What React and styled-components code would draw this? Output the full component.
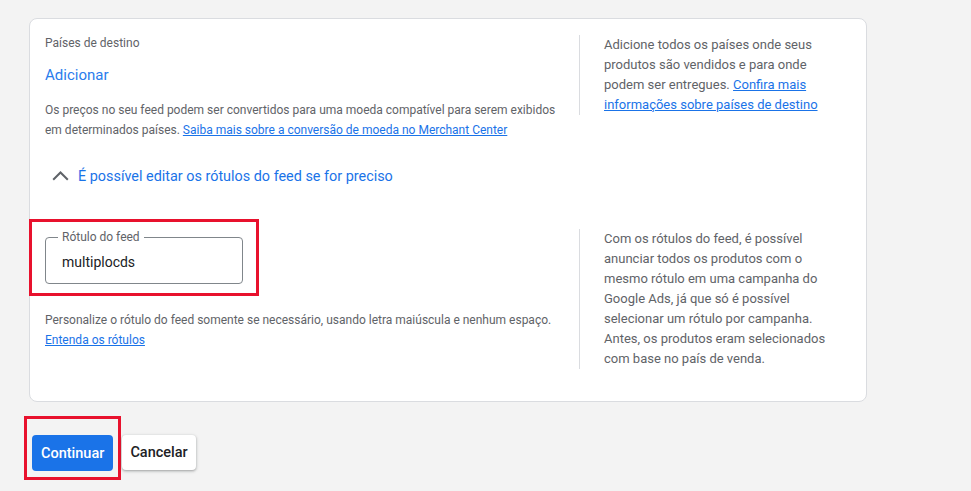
import React from "react";
import styled, { createGlobalStyle } from "styled-components";

const Global = createGlobalStyle`
  html, body { margin: 0; padding: 0; background: #f3f3f3; }
  body { font-family: Roboto, "Noto Sans", Arial, sans-serif; -webkit-font-smoothing: antialiased; }
  * { box-sizing: border-box; }
`;

const Page = styled.div`
  padding: 18px 0 0 29px;
  min-height: 491px;
`;

const Card = styled.section`
  width: 838px;
  background: #fff;
  border: 1px solid #dadce0;
  border-radius: 8px;
  padding: 16px 16px 32px 15px;
`;

const Row = styled.div`
  display: flex;
  align-items: flex-start;
  margin-top: ${(p) => p.$mt || 0}px;
`;

const LeftCol = styled.div`
  flex: 1;
  min-width: 0;
  padding-right: 20px;
`;

const RightCol = styled.div`
  flex: none;
  width: 271px;
  border-left: 1px solid #dadce0;
  padding: 0 14px 0 24px;
  font-size: 13px;
  line-height: 20px;
  color: #5f6368;
`;

const Caption = styled.div`
  font-size: 12px;
  line-height: 16px;
  color: #5f6368;
`;

const ActionLink = styled.button`
  display: block;
  margin-top: 14px;
  padding: 0;
  border: 0;
  background: none;
  font-family: Roboto, Arial, sans-serif;
  font-size: 15px;
  line-height: 20px;
  color: #2a7cec;
  cursor: pointer;
`;

const Help = styled.p`
  margin: ${(p) => p.$mt || 0}px 0 0;
  font-size: 12px;
  line-height: 20px;
  color: #5f6368;
`;

const A = styled.a`
  color: #1a73e8;
  text-decoration: underline;
`;

const Toggle = styled.button`
  display: flex;
  align-items: center;
  height: 40px;
  margin: 16px 0 0 7px;
  padding: 0;
  border: 0;
  background: none;
  gap: 9px;
  font-family: Roboto, Arial, sans-serif;
  font-size: 14.4px;
  color: #1a73e8;
  cursor: pointer;
`;

const Field = styled.div`
  position: relative;
  width: 198px;
  height: 47px;
  margin-top: 8px;
  border: 1px solid #80868b;
  border-radius: 4px;
  display: flex;
  align-items: center;
  padding: 2px 16px 0;
  font-size: 14px;
  color: #202124;
`;

const FieldLabel = styled.span`
  position: absolute;
  top: -9px;
  left: 12px;
  padding: 0 4px;
  background: #fff;
  font-size: 12px;
  line-height: 16px;
  color: #5f6368;
`;

const Highlight = styled.span`
  position: absolute;
  top: ${(p) => p.$t}px;
  left: ${(p) => p.$l}px;
  right: ${(p) => p.$r}px;
  bottom: ${(p) => p.$b}px;
  border: 3px solid #e8112d;
  pointer-events: none;
`;

const Buttons = styled.div`
  display: flex;
  gap: 9px;
  margin: 33px 0 0 3px;
`;

const Btn = styled.button`
  position: relative;
  height: ${(p) => (p.$primary ? 36 : 35)}px;
  padding: 0 ${(p) => (p.$primary ? 9 : 8)}px;
  border: 0;
  border-radius: 4px;
  font-family: Roboto, Arial, sans-serif;
  font-size: 14.5px;
  font-weight: 500;
  background: ${(p) => (p.$primary ? "#1a73e8" : "#fff")};
  color: ${(p) => (p.$primary ? "#fff" : "#202124")};
  box-shadow: ${(p) => (p.$primary ? "none" : "0 1px 2px rgba(60,64,67,.3), 0 1px 3px 1px rgba(60,64,67,.15)")};
  cursor: pointer;
`;

const Chevron = () => (
  <svg width="17" height="10" viewBox="0 0 17 10" aria-hidden="true">
    <polyline points="1.2,8.8 8.5,1.5 15.8,8.8" fill="none" stroke="#5f6368" strokeWidth="2" />
  </svg>
);

export default function App() {
  return (
    <Page>
      <Global />
      <Card>
        <Row>
          <LeftCol>
            <Caption>Países de destino</Caption>
            <ActionLink>Adicionar</ActionLink>
            <Help $mt={15}>
              Os preços no seu feed podem ser convertidos para uma moeda compatível para serem exibidos em
              determinados países. <A href="#">Saiba mais sobre a conversão de moeda no Merchant Center</A>
            </Help>
          </LeftCol>
          <RightCol>
            Adicione todos os países onde seus produtos são vendidos e para onde podem ser entregues.{" "}
            <A href="#">Confira mais informações sobre países de destino</A>
          </RightCol>
        </Row>
        <Toggle>
          <Chevron />
          É possível editar os rótulos do feed se for preciso
        </Toggle>
        <Row $mt={33}>
          <LeftCol>
            <Field>
              <FieldLabel>Rótulo do feed</FieldLabel>
              multiplocds
              <Highlight $t={-19} $l={-17} $r={-17} $b={-13} />
            </Field>
            <Help $mt={26}>
              Personalize o rótulo do feed somente se necessário, usando letra maiúscula e nenhum espaço.
              <br />
              <A href="#">Entenda os rótulos</A>
            </Help>
          </LeftCol>
          <RightCol>
            Com os rótulos do feed, é possível anunciar todos os produtos com o mesmo rótulo em uma campanha do
            Google Ads, já que só é possível selecionar um rótulo por campanha. Antes, os produtos eram
            selecionados com base no país de venda.
          </RightCol>
        </Row>
      </Card>
      <Buttons>
        <Btn $primary>
          Continuar
          <Highlight $t={-19} $l={-8} $r={-8} $b={-9} />
        </Btn>
        <Btn>Cancelar</Btn>
      </Buttons>
    </Page>
  );
}
